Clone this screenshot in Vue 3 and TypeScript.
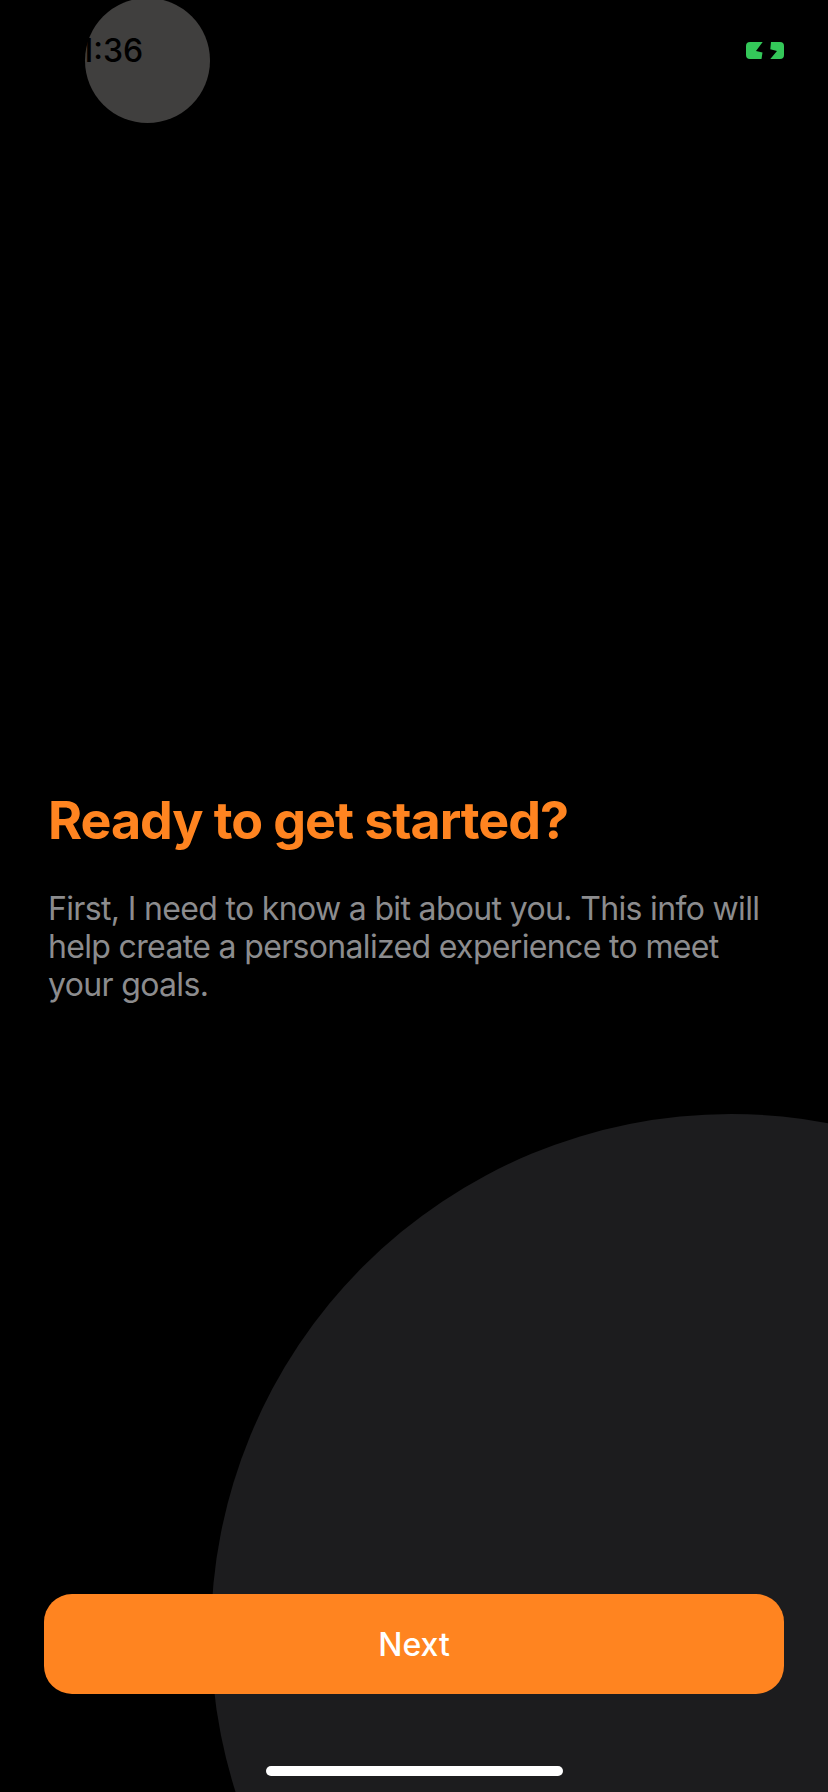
<script setup lang="ts">
const bodyText = 'First, I need to know a bit about you. This info will help create a personalized experience to meet your goals.'
</script>

<template>
  <main class="screen">
    <div class="blob" aria-hidden="true"></div>
    <div class="touch-dot" aria-hidden="true"></div>

    <header class="status">
      <span class="time">1:36</span>
      <svg class="battery" viewBox="0 0 38 17" aria-hidden="true">
        <path fill="#34c759" d="M4 0H16.7L10 9l6.5 1.5L15.5 17H4a4 4 0 0 1-4-4V4a4 4 0 0 1 4-4Z" />
        <path fill="#34c759" d="M25 0H34a4 4 0 0 1 4 4v9a4 4 0 0 1-4 4H24.3L31 9l-6.7-1.7Z" />
      </svg>
    </header>

    <section class="intro">
      <h1 class="title">Ready to get started?</h1>
      <p class="body">{{ bodyText }}</p>
    </section>

    <footer class="actions">
      <button class="next" type="button">Next</button>
      <div class="home-bar"></div>
    </footer>
  </main>
</template>

<style>
html, body { margin: 0; background: #000; }
</style>

<style scoped>
.screen {
  position: relative;
  width: 828px;
  height: 1792px;
  overflow: hidden;
  background: #000;
  display: flex;
  flex-direction: column;
  font-family: Inter, "Liberation Sans", sans-serif;
}
.blob {
  position: absolute;
  left: 211px;
  top: 1114px;
  width: 1040px;
  height: 1040px;
  border-radius: 50%;
  background: #1c1c1e;
}
.touch-dot {
  position: absolute;
  left: 85px;
  top: -2px;
  width: 125px;
  height: 125px;
  border-radius: 50%;
  background: #403f3e;
}
.status {
  position: relative;
  display: flex;
  justify-content: space-between;
  align-items: center;
  height: 100px;
  padding: 0 44px 0 80px;
  box-sizing: border-box;
}
.time {
  font-size: 32px;
  font-weight: 500;
  color: #000;
}
.battery {
  width: 38px;
  height: 17px;
}
.intro {
  position: relative;
  margin-top: 691px;
  padding: 0 48px;
}
.title {
  margin: 0;
  font-size: 52px;
  line-height: 60px;
  font-weight: 700;
  letter-spacing: -1.06px;
  color: #ff8420;
}
.body {
  margin: 39px 0 0;
  font-size: 32px;
  line-height: 38px;
  letter-spacing: -0.66px;
  color: #8c8c8e;
}
.actions {
  position: relative;
  margin-top: auto;
  padding: 0 44px 16px;
  display: flex;
  flex-direction: column;
  align-items: center;
}
.next {
  width: 100%;
  height: 100px;
  border: 0;
  border-radius: 28px;
  background: #ff8420;
  color: #fff;
  font: 500 32px Inter, "Liberation Sans", sans-serif;
}
.home-bar {
  margin-top: 72px;
  width: 297px;
  height: 10px;
  border-radius: 5px;
  background: #fff;
}
</style>
